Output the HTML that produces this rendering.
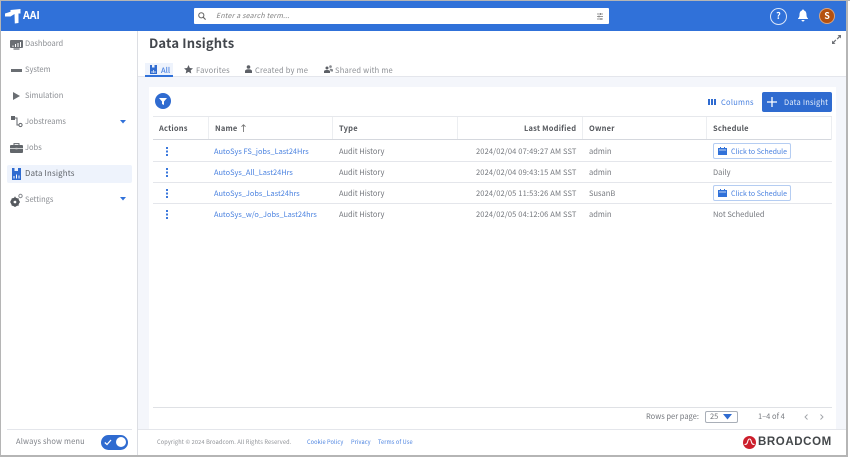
<!DOCTYPE html>
<html><head><meta charset="utf-8"><style>
*{box-sizing:border-box}
html,body{margin:0;padding:0;background:#fff}
body{width:850px;height:459px;overflow:hidden;position:relative;font-family:"Liberation Sans","Noto Sans CJK JP",sans-serif}
#w{position:absolute;left:0;top:0;width:850px;height:459px;filter:blur(.3px)}
.t{position:absolute;white-space:nowrap;font-family:"Noto Sans CJK JP","Liberation Sans",sans-serif;font-size:7.5px;line-height:12px;color:#75787e}
.a{position:absolute}
.b{color:#4a82e0}
.r{font-size:7.4px}
.h{font-weight:700;color:#55585d;letter-spacing:.2px}
.n{color:#8b8e93}
.tb{letter-spacing:.22px}
.l{height:1px;background:#e4e6eb;position:absolute}
.btn{position:absolute;left:713px;width:78px;height:16px;border:1px solid #b5cdf2;border-radius:2px;background:#fff}
.d{letter-spacing:.13px}
.s{font-size:7px;letter-spacing:0}
svg{position:absolute;overflow:visible}
</style></head><body><div id="w">
<div class="a" style="left:0;top:0;width:850px;height:1px;background:#b5b5b5"></div>
<div class="a" style="left:0;top:0;width:1px;height:456px;background:#b5b5b5"></div>
<div class="a" style="left:846px;top:0;width:2px;height:456px;background:#b5b5b5"></div>
<div class="a" style="left:0;top:455px;width:848px;height:2px;background:#b5b5b5"></div>

<div class="a" style="left:1px;top:1px;width:845px;height:30px;background:#3071d9"></div>
<svg style="left:5px;top:9px" width="16" height="15" viewBox="0 0 16 15"><path d="M0 4.500L5.500 2.800V1L15.500 0V4.500H13.500V14L9.800 14.500L9.500 5L5.500 7.500H0Z" fill="#fff"/></svg>
<div class="t" style="left:23px;top:9px;font-size:10.500px;font-weight:700;color:#fff;line-height:14px">AAI</div>
<div class="a" style="left:194px;top:8px;width:415px;height:16px;background:#fff;border-radius:1px"></div>
<svg style="left:198px;top:12px" width="8" height="8" viewBox="0 0 8 8"><circle cx="3.300" cy="3.300" r="2.600" fill="none" stroke="#666" stroke-width="1"/><path d="M5.200 5.200L7.600 7.600" stroke="#666" stroke-width="1.100"/></svg>
<div class="t" style="left:216px;top:10px;font-style:italic;font-size:7px;color:#7d7d7d;letter-spacing:.2px">Enter a search term...</div>
<svg style="left:597px;top:13px" width="6" height="7" viewBox="0 0 6 7"><path d="M0 1H6M0 3.500H6M0 6H6" stroke="#777" stroke-width=".8"/><path d="M3.500 0V2M2 2.500V4.500M4 5V7" stroke="#777" stroke-width=".8"/></svg>
<div class="a" style="left:770px;top:8px;width:17px;height:17px;border:1px solid #dbe6f8;border-radius:50%"></div>
<div class="t" style="left:770px;top:10px;width:17px;text-align:center;font-size:9px;font-weight:700;color:#fff">?</div>
<svg style="left:797px;top:9px" width="12" height="13" viewBox="0 0 12 13"><path d="M6 0.500C7 .5 7 1.500 7 1.500C9 2 9.500 4 9.500 6C9.500 8 10.500 9 11 9.500V10H1V9.500C1.500 9 2.500 8 2.500 6C2.500 4 3 2 5 1.500C5 1.500 5 .5 6 .5Z M4.500 11H7.500C7.500 12 6.800 12.500 6 12.500C5.200 12.500 4.500 12 4.500 11Z" fill="#fff"/></svg>
<div class="a" style="left:819px;top:8px;width:16px;height:16px;background:#b4500f;border:1px solid #d9a47e;border-radius:50%"></div>
<div class="t" style="left:819px;top:10px;width:16px;text-align:center;font-size:9px;font-weight:700;color:#fff">S</div>

<div class="a" style="left:137px;top:31px;width:1px;height:424px;background:#dcdee3"></div>
<svg style="left:10px;top:40px" width="13" height="10" viewBox="0 0 13 10"><rect x="0" y="0" width="13" height="8" rx="1" fill="#6a6e73"/><rect x="3.500" y="8" width="6" height="2" fill="#a0a3a7"/><path d="M3 7V5.500M5.500 7V4M8 7V3M10.500 7V2" stroke="#fff" stroke-width="1"/></svg>
<div class="t n" style="left:25px;top:38px">Dashboard</div>
<div class="a" style="left:11px;top:69px;width:11px;height:3px;background:#6a6e73"></div>
<div class="t n" style="left:25px;top:64px">System</div>
<svg style="left:13px;top:92px" width="7" height="8" viewBox="0 0 7 8"><path d="M0 0L7 4L0 8Z" fill="#6a6e73"/></svg>
<div class="t n" style="left:25px;top:90px">Simulation</div>
<svg style="left:11px;top:116px" width="12" height="11" viewBox="0 0 12 11"><rect x="0" y="0" width="4" height="4" fill="#62666b"/><path d="M3 2H6V9H8" fill="none" stroke="#62666b" stroke-width="1"/><circle cx="9.500" cy="9" r="1.600" fill="none" stroke="#62666b" stroke-width="1"/></svg>
<div class="t n" style="left:25px;top:116px">Jobstreams</div>
<svg style="left:120px;top:120px" width="6" height="4" viewBox="0 0 6 4"><path d="M0 0H6L3 3.500Z" fill="#3071d9"/></svg>
<svg style="left:10px;top:143px" width="13" height="10" viewBox="0 0 13 10"><path d="M4 2V.6H9V2" fill="none" stroke="#62666b"/><rect x="0" y="2" width="13" height="8" rx="1" fill="#62666b"/><path d="M0 5.500H13" stroke="#fff" stroke-width=".7"/><rect x="5.500" y="4.800" width="2" height="1.500" fill="#ccc"/></svg>
<div class="t n" style="left:25px;top:142px">Jobs</div>
<div class="a" style="left:7px;top:165px;width:125px;height:18px;background:#eef3fc;border-radius:2px"></div>
<svg style="left:12px;top:168px" width="9" height="12" viewBox="0 0 9 12"><path d="M0 0H2.500V3H6V0H9V12H0Z" fill="#2f6bd0"/><path d="M2 10.500V8M4.500 10.500V6.500M7 10.500V7.500" stroke="#fff" stroke-width="1"/></svg>
<div class="t" style="left:25px;top:168px;color:#5c6066;letter-spacing:.2px;font-size:7.8px">Data Insights</div>
<svg style="left:10px;top:193px" width="13" height="14" viewBox="0 0 13 14"><circle cx="5" cy="9" r="3.200" fill="none" stroke="#55595e" stroke-width="2.400"/><path d="M5 3.800V14M.2 9H10M1.800 5.500L8.500 12.500M8.500 5.500L1.800 12.500" stroke="#55595e" stroke-width="1.300"/><circle cx="5" cy="9" r="1.300" fill="#fff"/><circle cx="10.500" cy="3" r="1.700" fill="none" stroke="#85888d" stroke-width="1"/></svg>
<div class="t n" style="left:25px;top:194px">Settings</div>
<svg style="left:120px;top:197px" width="6" height="4" viewBox="0 0 6 4"><path d="M0 0H6L3 3.500Z" fill="#3071d9"/></svg>
<div class="l" style="left:7px;top:429px;width:125px"></div>
<div class="t" style="left:16px;top:436px;color:#7f8288;letter-spacing:.15px">Always show menu</div>
<div class="a" style="left:101px;top:435px;width:27px;height:15px;background:#2f6bd0;border-radius:8px"></div>
<div class="a" style="left:116px;top:437px;width:10px;height:10px;background:#fff;border-radius:50%"></div>
<svg style="left:104px;top:439px" width="8" height="7" viewBox="0 0 8 7"><path d="M.8 3.500L3 5.500L7 1" fill="none" stroke="#fff" stroke-width="1.300"/></svg>

<div class="t" style="left:149px;top:34px;font-size:13px;line-height:18px;font-weight:700;color:#43474d;letter-spacing:.15px">Data Insights</div>
<svg style="left:832px;top:35px" width="9" height="9" viewBox="0 0 9 9"><path d="M5.500 0H9V3.500L7.800 2.300L5.500 4.500L4.700 3.700L6.900 1.200Z M3.500 9H0V5.500L1.200 6.700L3.500 4.500L4.300 5.300L2.100 7.800Z" fill="#6d7075"/></svg>
<div class="a" style="left:138px;top:76px;width:708px;height:353px;background:#f4f6fb;border-top:1px solid #e4e6ec"></div>
<div class="a" style="left:145px;top:63px;width:28px;height:12px;background:#eef3fc"></div>
<div class="a" style="left:145px;top:75px;width:28px;height:2px;background:#3071d9"></div>
<svg style="left:150px;top:65px" width="7" height="9" viewBox="0 0 7 9"><path d="M0 0H2V2.500H4.500V0H7V9H0Z" fill="#2f6bd0"/><path d="M2 8V6M3.500 8V5M5 8V6" stroke="#fff" stroke-width=".7"/></svg>
<div class="t b" style="left:161px;top:65px;font-weight:500">All</div>
<svg style="left:184px;top:65px" width="9" height="9" viewBox="0 0 10 10"><path d="M5 0L6.500 3.300L10 3.700L7.400 6L8.100 9.500L5 7.700L1.900 9.500L2.600 6L0 3.700L3.500 3.300Z" fill="#5d6066"/></svg>
<div class="t n tb" style="left:196px;top:65px">Favorites</div>
<svg style="left:245px;top:65px" width="7" height="8" viewBox="0 0 7 8"><circle cx="3.500" cy="2" r="1.800" fill="#5d6066"/><path d="M0 8V6.300C0 5 1.500 4.300 3.500 4.300C5.500 4.300 7 5 7 6.300V8Z" fill="#5d6066"/></svg>
<div class="t n tb" style="left:255px;top:65px">Created by me</div>
<svg style="left:324px;top:65px" width="9" height="8" viewBox="0 0 9 8"><circle cx="3" cy="3" r="1.500" fill="#5d6066"/><circle cx="6.500" cy="1.600" r="1.300" fill="#85888d"/><path d="M0 8V6.300C0 5.400 1.300 5 3 5C4.700 5 6 5.400 6 6.300V8Z" fill="#5d6066"/><path d="M5.500 3.800C7.500 3.600 9 4 9 5V6.500H6.800" fill="#85888d"/></svg>
<div class="t n tb" style="left:335px;top:65px">Shared with me</div>

<div class="a" style="left:149px;top:87px;width:687px;height:342px;background:#fff"></div>
<div class="a" style="left:155px;top:93px;width:16px;height:16px;background:#2f6bd0;border-radius:50%"></div>
<svg style="left:159px;top:98px" width="8" height="7" viewBox="0 0 8 7"><path d="M0 0H8L5 3.500V7L3 6V3.500Z" fill="#fff"/></svg>
<svg style="left:708px;top:99px" width="8" height="6" viewBox="0 0 8 6"><path d="M0 0H2V6H0ZM3 0H5V6H3ZM6 0H8V6H6Z" fill="#2f6bd0"/></svg>
<div class="t b" style="left:721px;top:97px;letter-spacing:.25px">Columns</div>
<div class="a" style="left:762px;top:92px;width:70px;height:20px;background:#2f6bd0;border-radius:2px"></div>
<svg style="left:767px;top:97px" width="10" height="10" viewBox="0 0 10 10"><path d="M5 0V10M0 5H10" stroke="#fff" stroke-width="1.300"/></svg>
<div class="t" style="left:784px;top:97px;color:#e6eefb;letter-spacing:.2px">Data Insight</div>

<div class="l" style="left:153px;top:116px;width:679px;height:1px;background:#e6e8ec"></div>
<div class="l" style="left:153px;top:139px;width:679px;height:1px;background:#d5d8de"></div>
<div class="l" style="left:208px;top:117px;width:1px;height:22px;background:#eceef1"></div>
<div class="l" style="left:332px;top:117px;width:1px;height:22px;background:#eceef1"></div>
<div class="l" style="left:457px;top:117px;width:1px;height:22px;background:#eceef1"></div>
<div class="l" style="left:582px;top:117px;width:1px;height:22px;background:#eceef1"></div>
<div class="l" style="left:706px;top:117px;width:1px;height:22px;background:#eceef1"></div>
<div class="l" style="left:831px;top:117px;width:1px;height:23px;background:#eceef1"></div>
<div class="t h" style="left:159px;top:123px">Actions</div>
<div class="t h" style="left:215px;top:123px">Name</div>
<svg style="left:241px;top:124px" width="5" height="8" viewBox="0 0 5 8"><path d="M2.500 8V.7M.5 2.700L2.500 .7L4.500 2.700" fill="none" stroke="#777" stroke-width=".9"/></svg>
<div class="t h" style="left:339px;top:123px">Type</div>
<div class="t h" style="left:524px;top:123px">Last Modified</div>
<div class="t h" style="left:589px;top:123px">Owner</div>
<div class="t h" style="left:713px;top:123px">Schedule</div>

<div class="l" style="left:153px;top:161px;width:679px"></div>
<div class="l" style="left:153px;top:182px;width:679px"></div>
<div class="l" style="left:153px;top:203px;width:679px"></div>

<svg style="left:166px;top:147px" width="2" height="9"><path d="M0 0h2v2H0zM0 3.500h2v2H0zM0 7h2v2H0z" fill="#3b78dc"/></svg>
<svg style="left:166px;top:168px" width="2" height="9"><path d="M0 0h2v2H0zM0 3.500h2v2H0zM0 7h2v2H0z" fill="#3b78dc"/></svg>
<svg style="left:166px;top:189px" width="2" height="9"><path d="M0 0h2v2H0zM0 3.500h2v2H0zM0 7h2v2H0z" fill="#3b78dc"/></svg>
<svg style="left:166px;top:210px" width="2" height="9"><path d="M0 0h2v2H0zM0 3.500h2v2H0zM0 7h2v2H0z" fill="#3b78dc"/></svg>

<div class="t b r" style="left:214px;top:146px">AutoSys FS_jobs_Last24Hrs</div>
<div class="t" style="left:339px;top:146px">Audit History</div>
<div class="t d" style="left:476px;top:146px">2024/02/04 07:49:27 AM SST</div>
<div class="t" style="left:589px;top:146px">admin</div>
<div class="btn" style="top:143px"></div>
<svg style="left:718px;top:147px" width="9" height="8" viewBox="0 0 9 8"><path d="M0 1H2V0H3V1H6V0H7V1H9V8H0Z" fill="#3071d9"/><path d="M1 3H8" stroke="#fff" stroke-width=".7"/></svg>
<div class="t b s" style="left:731px;top:146px">Click to Schedule</div>

<div class="t b r" style="left:214px;top:167px">AutoSys_All_Last24Hrs</div>
<div class="t" style="left:339px;top:167px">Audit History</div>
<div class="t d" style="left:476px;top:167px">2024/02/04 09:43:15 AM SST</div>
<div class="t" style="left:589px;top:167px">admin</div>
<div class="t" style="left:713px;top:167px">Daily</div>

<div class="t b r" style="left:214px;top:188px">AutoSys_Jobs_Last24hrs</div>
<div class="t" style="left:339px;top:188px">Audit History</div>
<div class="t d" style="left:476px;top:188px">2024/02/05 11:53:26 AM SST</div>
<div class="t" style="left:589px;top:188px">SusanB</div>
<div class="btn" style="top:185px"></div>
<svg style="left:718px;top:189px" width="9" height="8" viewBox="0 0 9 8"><path d="M0 1H2V0H3V1H6V0H7V1H9V8H0Z" fill="#3071d9"/><path d="M1 3H8" stroke="#fff" stroke-width=".7"/></svg>
<div class="t b s" style="left:731px;top:188px">Click to Schedule</div>

<div class="t b r" style="left:214px;top:209px">AutoSys_w/o_Jobs_Last24hrs</div>
<div class="t" style="left:339px;top:209px">Audit History</div>
<div class="t d" style="left:476px;top:209px">2024/02/05 04:12:06 AM SST</div>
<div class="t" style="left:589px;top:209px">admin</div>
<div class="t" style="left:713px;top:209px">Not Scheduled</div>

<div class="l" style="left:153px;top:407px;width:679px;background:#dfe1e5"></div>
<div class="t" style="left:646px;top:411px">Rows per page:</div>
<div class="a" style="left:705px;top:411px;width:33px;height:12px;border:1px solid #a9afb8;border-radius:2px"></div>
<div class="t" style="left:710px;top:411px">25</div>
<svg style="left:723px;top:414px" width="9" height="6" viewBox="0 0 9 6"><path d="M0 0H9L4.500 5.500Z" fill="#2f6bd0"/></svg>
<div class="t" style="left:758px;top:411px">1–4 of 4</div>
<svg style="left:804px;top:414px" width="4" height="6" viewBox="0 0 4 6"><path d="M3.500 .5L1 3L3.500 5.500" fill="none" stroke="#a0a3a8" stroke-width=".9"/></svg>
<svg style="left:820px;top:414px" width="4" height="6" viewBox="0 0 4 6"><path d="M.5 .5L3 3L.5 5.500" fill="none" stroke="#a0a3a8" stroke-width=".9"/></svg>

<div class="l" style="left:138px;top:429px;width:708px"></div>
<div class="t" style="left:157px;top:436px;font-size:5.600px;color:#8b8e93;letter-spacing:.15px">Copyright © 2024 Broadcom. All Rights Reserved.</div>
<div class="t b" style="left:307px;top:436px;font-size:5.600px;letter-spacing:.1px">Cookie Policy</div>
<div class="t b" style="left:351px;top:436px;font-size:5.600px;letter-spacing:.1px">Privacy</div>
<div class="t b" style="left:378px;top:436px;font-size:5.600px;letter-spacing:.1px">Terms of Use</div>
<svg style="left:743px;top:436px" width="13" height="13" viewBox="0 0 13 13"><circle cx="6.500" cy="6.500" r="6.500" fill="#cc1e2b"/><path d="M1.500 8.500C3.500 8.500 4 8 4.700 5.500C5.200 3.500 5.800 3 6.500 3C7.200 3 7.800 3.500 8.300 5.500C9 8 9.500 8.500 11.500 8.500" fill="none" stroke="#fff" stroke-width="1.100"/></svg>
<div class="t" style="left:758px;top:434px;font-size:11.500px;line-height:16px;font-weight:700;color:#43474a;letter-spacing:.6px;font-family:'Liberation Sans',sans-serif">BROADCOM</div>
</div></body></html>
